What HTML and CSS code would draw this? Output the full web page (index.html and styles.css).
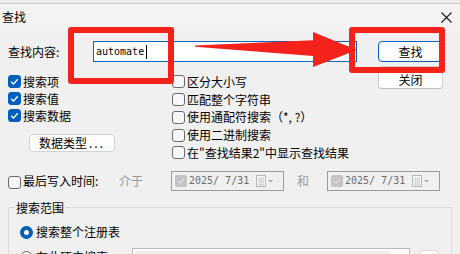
FILE: index.html
```html
<!DOCTYPE html>
<html lang="zh-CN">
<head>
<meta charset="utf-8">
<title>查找</title>
<link rel="stylesheet" href="styles.css">
</head>
<body>
<div class="win">
  <div class="strip"></div>
  <div class="titlebar">
    <span class="title">查找</span>
    <svg class="close" width="11" height="11" viewBox="0 0 11 11"><path d="M0.5 0.5 L10.5 10.5 M10.5 0.5 L0.5 10.5" stroke="#1a1a1a" stroke-width="1.1" fill="none"/></svg>
  </div>
  <div class="content">
    <div class="top">
      <div class="main">
        <div class="findrow">
          <span class="lbl">查找内容:</span>
          <div class="input"><span class="mono">automate</span><span class="caret"></span></div>
        </div>
        <div class="opts">
          <div class="col left">
            <div class="chk"><span class="box on"><svg viewBox="0 0 13 13"><path d="M3.2 6.8 L5.5 9 L9.8 4.3" stroke="#fff" stroke-width="1.3" fill="none"/></svg></span><span>搜索项</span></div>
            <div class="chk"><span class="box on"><svg viewBox="0 0 13 13"><path d="M3.2 6.8 L5.5 9 L9.8 4.3" stroke="#fff" stroke-width="1.3" fill="none"/></svg></span><span>搜索值</span></div>
            <div class="chk"><span class="box on"><svg viewBox="0 0 13 13"><path d="M3.2 6.8 L5.5 9 L9.8 4.3" stroke="#fff" stroke-width="1.3" fill="none"/></svg></span><span>搜索数据</span></div>
            <button class="btn dtype">数据类型<span class="dots">...</span></button>
          </div>
          <div class="col right">
            <div class="chk tall"><span class="box"></span><span>区分大小写</span></div>
            <div class="chk tall"><span class="box"></span><span>匹配整个字符串</span></div>
            <div class="chk tall"><span class="box"></span><span>使用通配符搜索（*, ?）</span></div>
            <div class="chk tall"><span class="box"></span><span>使用二进制搜索</span></div>
            <div class="chk tall"><span class="box"></span><span>在"查找结果2"中显示查找结果</span></div>
          </div>
        </div>
      </div>
      <div class="btns">
        <button class="btn primary">查找</button>
        <button class="btn close-btn">关闭</button>
      </div>
    </div>

    <div class="daterow">
      <div class="chk"><span class="box"></span><span class="dlabel">最后写入时间:</span></div>
      <span class="gray between">介于</span>
      <div class="picker">
        <span class="pbox"><svg viewBox="0 0 12 12"><path d="M3 6.2 L5 8.2 L9 4" stroke="#e2e2e2" stroke-width="1.1" fill="none"/></svg></span>
        <span class="mono ptext">2025/ 7/31</span>
        <svg class="cal" width="18" height="12" viewBox="0 0 18 12"><rect x="0.5" y="0.5" width="9" height="11" fill="#f6f6f6" stroke="#b8b8b8"/><path d="M2 3.5 H8 M2 5.5 H8 M2 7.5 H8 M2 9.5 H8 M3.5 2.5 V11 M5.5 2.5 V11 M7.5 2.5 V11" stroke="#d0d0d0" stroke-width="0.8"/><path d="M12 5 L17 5 L14.5 7.6 Z" fill="#a8a8a8"/></svg>
      </div>
      <span class="gray and">和</span>
      <div class="picker">
        <span class="pbox"><svg viewBox="0 0 12 12"><path d="M3 6.2 L5 8.2 L9 4" stroke="#e2e2e2" stroke-width="1.1" fill="none"/></svg></span>
        <span class="mono ptext">2025/ 7/31</span>
        <svg class="cal" width="18" height="12" viewBox="0 0 18 12"><rect x="0.5" y="0.5" width="9" height="11" fill="#f6f6f6" stroke="#b8b8b8"/><path d="M2 3.5 H8 M2 5.5 H8 M2 7.5 H8 M2 9.5 H8 M3.5 2.5 V11 M5.5 2.5 V11 M7.5 2.5 V11" stroke="#d0d0d0" stroke-width="0.8"/><path d="M12 5 L17 5 L14.5 7.6 Z" fill="#a8a8a8"/></svg>
      </div>
    </div>

    <fieldset class="group">
      <legend>搜索范围</legend>
      <div class="radio-row r1"><span class="radio on"></span><span>搜索整个注册表</span></div>
      <div class="radio-row r2">
        <span class="radio"></span><span class="rlabel">在此项中搜索</span>
        <div class="keybox"><div class="keyinner"></div></div>
        <button class="btn mini"></button>
      </div>
    </fieldset>
  </div>

  <div class="overlay">
    <div class="mark m1"></div>
    <div class="mark m2"></div>
    <svg class="arrow" width="460" height="254" viewBox="0 0 460 254"><polygon points="195,45.4 313,40.2 313,32 357,50 313,67 313,56 195,46.8" fill="#f5221b"/></svg>
  </div>
</div>
</body>
</html>
```

FILE: styles.css
```css
* { box-sizing: border-box; }
html, body { margin: 0; padding: 0; }
body {
  font-family: "Noto Sans CJK SC", "Noto Sans", sans-serif;
  font-size: 12px;
  line-height: 14px;
  color: #000;
  background: #f0f0f0;
}
.win {
  position: relative;
  width: 460px;
  height: 254px;
  overflow: hidden;
  background: #f0f0f0;
}
.strip { height: 3px; background: #ececec; }
.titlebar {
  height: 27px;
  border-top: 1px solid #cacaca;
  background: #f3f3f3;
  display: flex;
  align-items: center;
  justify-content: space-between;
  padding: 0 8px 0 2px;
}
.title { font-size: 12px; }
.close { display: block; margin-top: 1px; }

.content { padding: 11px 0 0 8px; }
.top { display: flex; }
.main { width: 349px; }
.findrow { display: flex; align-items: center; height: 21px; }
.lbl { width: 85px; }
.input {
  width: 264px;
  height: 21px;
  border: 1px solid #0067c0;
  background: #fff;
  display: flex;
  align-items: center;
  padding-left: 2px;
}
.mono { font-family: "DejaVu Sans Mono", "Liberation Mono", monospace; font-size: 10px; }
.caret { width: 1px; height: 14px; background: #000; margin-left: 2px; }

.btns { margin-left: 21px; width: 65px; display: flex; flex-direction: column; }
.btn {
  font-family: inherit;
  font-size: 12px;
  line-height: 14px;
  color: #000;
  background: #fdfdfd;
  border: 1px solid #d0d0d0;
  border-bottom-color: #bdbdbd;
  border-radius: 4px;
  padding: 0;
  margin: 0;
}
.primary { height: 21px; border: 1px solid #005fb8; }
.close-btn { height: 23px; margin-top: 4px; padding-top: 4px; }

.opts { display: flex; margin-top: 11px; }
.col.left { width: 164px; }
.chk { display: flex; align-items: center; height: 17px; gap: 2px; }
.chk.tall { height: 17.75px; }
.box {
  width: 13px;
  height: 13px;
  border: 1px solid #6b6b6b;
  border-radius: 3px;
  background: #f7f7f7;
  flex: none;
}
.box.on { background: #005fb8; border-color: #005fb8; }
.box svg { display: block; width: 13px; height: 13px; margin: -1px; }
.dtype { display: block; margin: 10px 0 0 21px; width: 86px; height: 18px; border-color: #d3d3d3; }
.dots { letter-spacing: 2px; margin-left: 2px; }

.daterow { display: flex; align-items: center; height: 20px; margin-top: 9px; }
.daterow .chk { width: 111px; }
.daterow .box { margin-top: 3px; }
.gray { color: #9a9a9a; }
.between { width: 52px; }
.and { width: 30px; margin-left: 13px; }
.picker {
  width: 113px;
  height: 20px;
  border: 1px solid #9b9b9b;
  background: #f0f0f0;
  display: flex;
  align-items: center;
  padding-left: 3px;
}
.pbox {
  width: 12px;
  height: 12px;
  border-radius: 2px;
  background: #c4c4c4;
  flex: none;
}
.pbox svg { display: block; width: 12px; height: 12px; }
.ptext { color: #6b6b6b; margin-left: 2px; width: 67px; }
.cal { display: block; }

.group {
  width: 444px;
  margin: 10px 0 0 0;
  padding: 0;
  border: 1px solid #dcdcdc;
  min-width: 0;
}
.group legend {
  margin-left: 5px;
  padding: 0 2px;
  line-height: 14px;
}
.radio-row { display: flex; gap: 3px; margin-left: 11px; }
.r1 { height: 17px; align-items: center; margin-top: 9px; }
.r2 { margin-top: 6px; align-items: flex-start; }
.radio {
  width: 13px;
  height: 13px;
  border-radius: 50%;
  border: 1px solid #6b6b6b;
  background: #f7f7f7;
  flex: none;
}
.r2 .radio { margin-top: 4px; }
.radio.on { border: 4px solid #005fb8; background: #fff; }
.rlabel { width: 93px; margin-top: 3px; }
.keybox {
  width: 278px;
  height: 22px;
  margin-top: 1px;
  border: 1px solid #b9b9b9;
  background: #fff;
  padding: 2px;
}
.keyinner { width: 256px; height: 16px; background: #efefef; }
.mini { width: 20px; height: 20px; margin: 3px 0 0 6px; border-color: #dadada; }

.overlay { position: absolute; left: 0; top: 0; width: 460px; height: 254px; pointer-events: none; }
.mark { position: absolute; border: 6px solid #f5221b; border-radius: 3px; }
.m1 { left: 68px; top: 27px; width: 106px; height: 57px; }
.m2 { left: 349px; top: 27px; width: 96px; height: 46px; }
.arrow { position: absolute; left: 0; top: 0; }
```
